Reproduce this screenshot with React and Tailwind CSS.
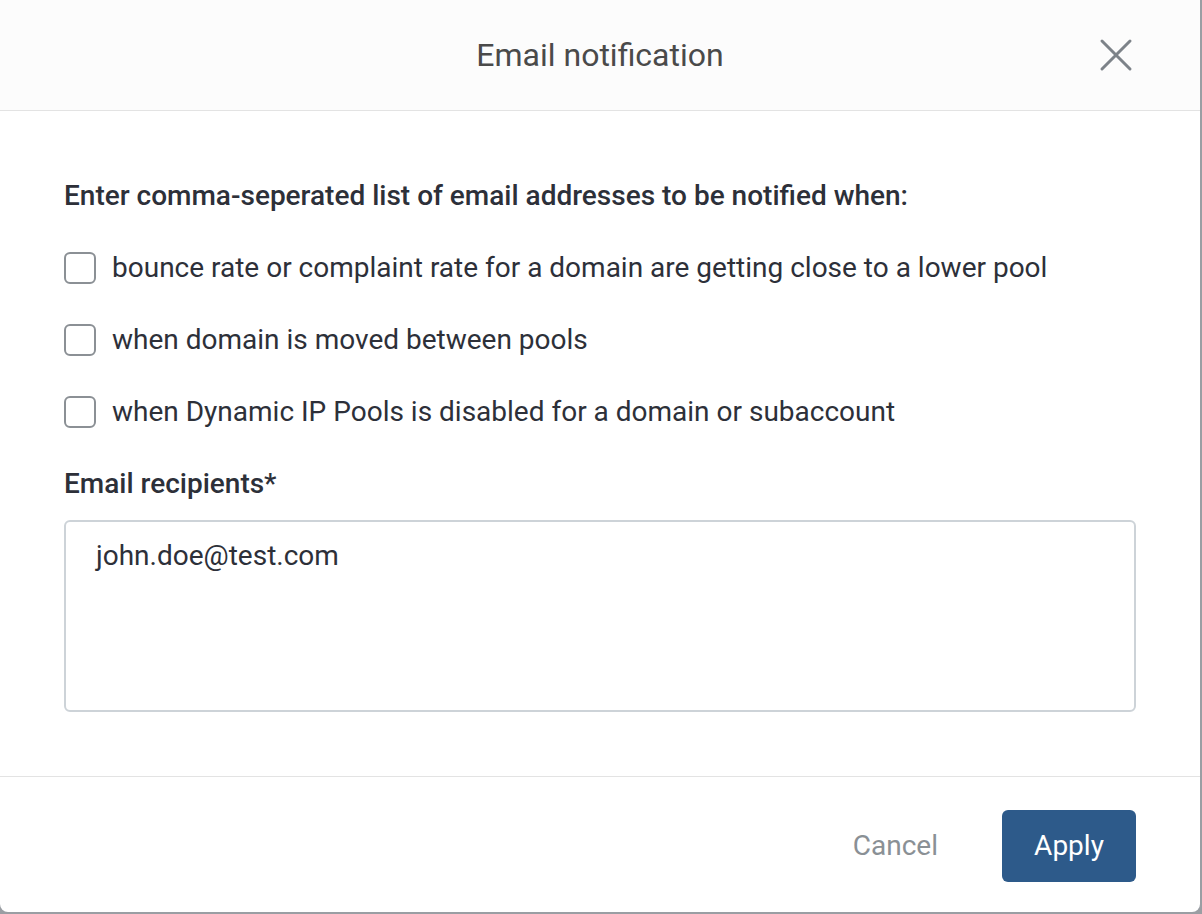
export default function App() {
  const options = [
    'bounce rate or complaint rate for a domain are getting close to a lower pool',
    'when domain is moved between pools',
    'when Dynamic IP Pools is disabled for a domain or subaccount',
  ]

  return (
    <div className="w-[1202px] h-[914px] bg-[#9a9ea3] overflow-hidden" style={{ fontFamily: 'Roboto, "Noto Sans", sans-serif' }}>
      <div className="w-[1200px] h-[912px] bg-white rounded-b-[8px] flex flex-col">
        {/* Header */}
        <div className="relative h-[111px] shrink-0 bg-[#fcfcfc] border-b border-[#e3e3e3] flex items-center justify-center">
          <h2 className="text-[32px] leading-[36px] text-[#4a4a4a] font-normal">Email notification</h2>
          <button className="absolute left-[1098px] top-[38px] w-[36px] h-[34px] flex items-center justify-center">
            <svg width="34" height="34" viewBox="0 0 34 34" fill="none">
              <path d="M3 3 L31 31 M31 3 L3 31" stroke="#7d8389" strokeWidth="3" strokeLinecap="round" />
            </svg>
          </button>
        </div>

        {/* Body */}
        <div className="px-16 pt-[69px] pb-[64px] border-b border-[#e3e3e3] text-[#2d3039]">
          <p className="text-[28px] leading-[32px] font-medium">
            Enter comma-seperated list of email addresses to be notified when:
          </p>
          <div className="mt-10 flex flex-col gap-10">
            {options.map((o) => (
              <label key={o} className="flex items-center gap-4 h-8">
                <span className="w-8 h-8 rounded-[6px] border-2 border-[#8b9095] bg-white shrink-0" />
                <span className="text-[28px] leading-[32px]">{o}</span>
              </label>
            ))}
          </div>
          <p className="mt-10 text-[28px] leading-[32px] font-medium">Email recipients*</p>
          <div className="mt-5 h-[192px] rounded-[6px] border-2 border-[#cdd3d8] px-[30px] pt-[18px]">
            <span className="text-[28px] leading-[32px]">john.doe@test.com</span>
          </div>
        </div>

        {/* Footer */}
        <div className="flex-1 flex items-start justify-end px-16 pt-[33px]">
          <button className="h-[72px] px-4 text-[28px] text-[#8a9095] mr-[48px]">Cancel</button>
          <button className="h-[72px] w-[134px] rounded-[6px] bg-[#2d5a8a] text-white text-[28px]">Apply</button>
        </div>
      </div>
    </div>
  )
}
